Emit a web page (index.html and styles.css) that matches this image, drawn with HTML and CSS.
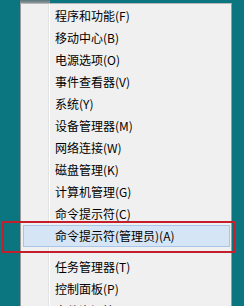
FILE: index.html
```html
<!DOCTYPE html>
<html lang="zh-CN">
<head>
<meta charset="utf-8">
<link rel="stylesheet" href="styles.css">
</head>
<body>
<div class="shade"></div>
<div class="menu">
  <div class="item">程序和功能(F)</div>
  <div class="item">移动中心(B)</div>
  <div class="item">电源选项(O)</div>
  <div class="item">事件查看器(V)</div>
  <div class="item">系统(Y)</div>
  <div class="item">设备管理器(M)</div>
  <div class="item">网络连接(W)</div>
  <div class="item">磁盘管理(K)</div>
  <div class="item">计算机管理(G)</div>
  <div class="item">命令提示符(C)</div>
  <div class="item active">命令提示符(管理员)(A)<span class="mark"></span></div>
  <div class="sep"></div>
  <div class="item">任务管理器(T)</div>
  <div class="item">控制面板(P)</div>
  <div class="item">文件资源管理器(E)</div>
  <div class="item">搜索(S)</div>
  <div class="item">运行(R)</div>
</div>
</body>
</html>
```
FILE: styles.css
```css
html, body {
  margin: 0;
  padding: 0;
  background: #0b7680;
  height: 306px;
  overflow: hidden;
}
body {
  font-family: "Noto Sans CJK SC", "Noto Sans", sans-serif;
  font-size: 12px;
  color: #000;
}
.shade {
  width: 30px;
  height: 3px;
  margin-left: 20px;
  background: linear-gradient(to bottom, #5b7478, #8a9a9c);
}
.menu {
  width: 207px;
  margin-left: 20px;
  border: 1px solid #9a9a9a;
  border-top-color: #b8b8b8;
  padding: 1px 1px 0 2px;
  background:
    linear-gradient(to right, transparent 27px, #e2e3e3 27px, #e2e3e3 28px, #ffffff 28px, #ffffff 29px, transparent 29px),
    #f0f0f0;
}
.item {
  position: relative;
  height: 22px;
  line-height: 22px;
  padding-left: 32px;
  white-space: nowrap;
  box-sizing: border-box;
}
.item.active {
  background: #d6e5f5;
  border: 1px solid #a9c6e6;
  padding-left: 31px;
  line-height: 20px;
}
.mark {
  position: absolute;
  left: -22px;
  top: -5px;
  width: 229px;
  height: 28px;
  border: 2px solid #c41f2a;
}
.sep {
  height: 9px;
  margin-left: 29px;
  background: linear-gradient(to bottom, transparent 4px, #d8d8d8 4px, #d8d8d8 5px, #ffffff 5px, #ffffff 6px, transparent 6px);
}
```
